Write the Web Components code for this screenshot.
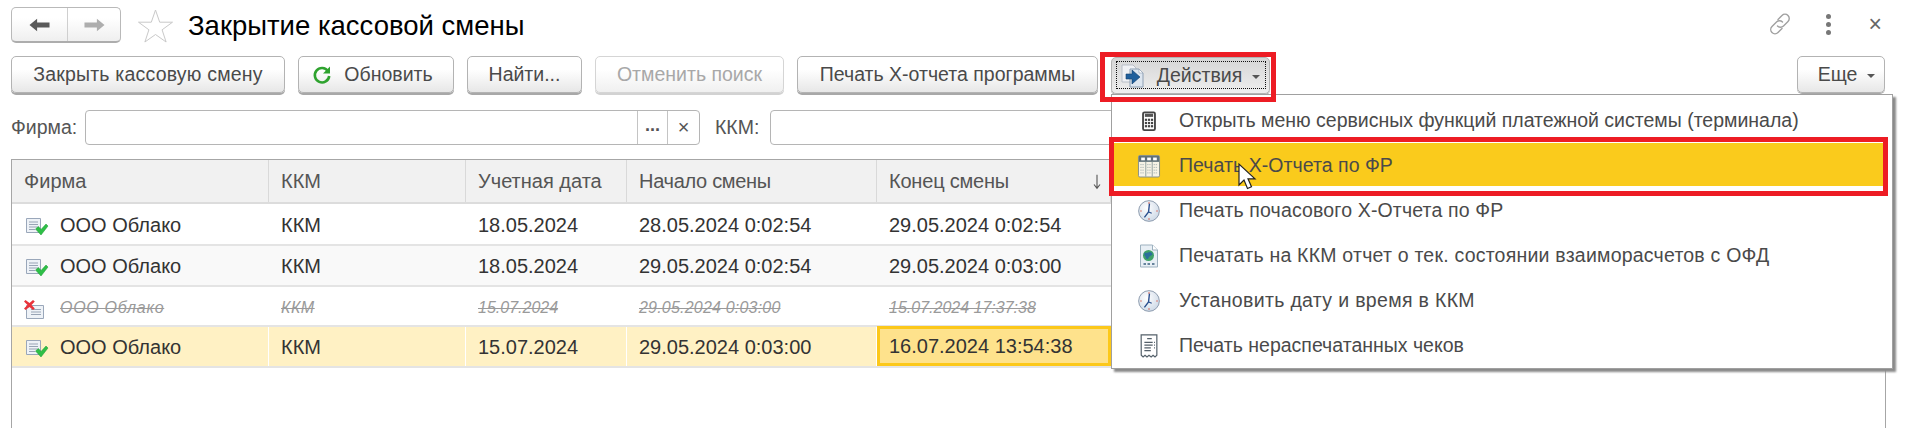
<!DOCTYPE html>
<html lang="ru"><head><meta charset="utf-8"><title>Закрытие кассовой смены</title>
<style>
html,body{margin:0;padding:0;background:#fff;overflow:hidden;width:1908px;height:428px}
body{font:19.5px "Liberation Sans",Arial,sans-serif;color:#333}
</style></head><body>
<onec-form>
  <onec-header slot="header" title-text="Закрытие кассовой смены"></onec-header>
  <onec-toolbar slot="toolbar">
    <onec-button style="width:274px;letter-spacing:.2px">Закрыть кассовую смену</onec-button>
    <onec-button style="width:156px;padding-right:7px"><onec-icon name="refresh" slot="icon" size="20"></onec-icon>Обновить</onec-button>
    <onec-button style="width:115px">Найти...</onec-button>
    <onec-button style="width:189px" disabled>Отменить поиск</onec-button>
    <onec-button style="width:301px">Печать X-отчета программы</onec-button>
    <onec-button style="width:159px" pressed drop><onec-icon name="actions" slot="icon" size="24"></onec-icon>Действия</onec-button>
    <onec-button style="width:88px;margin-left:auto;padding-left:11px" drop plain>Еще</onec-button>
  </onec-toolbar>
  <onec-filter slot="filter"></onec-filter>
  <onec-grid slot="grid">
    <onec-row head>
      <onec-cell>Фирма</onec-cell><onec-cell>ККМ</onec-cell><onec-cell>Учетная дата</onec-cell><onec-cell style="letter-spacing:-.3px">Начало смены</onec-cell><onec-cell sort style="letter-spacing:-.2px">Конец смены</onec-cell><onec-cell></onec-cell>
    </onec-row>
    <onec-row style="height:42px">
      <onec-cell icon="ok">ООО Облако</onec-cell><onec-cell>ККМ</onec-cell><onec-cell>18.05.2024</onec-cell><onec-cell>28.05.2024 0:02:54</onec-cell><onec-cell>29.05.2024 0:02:54</onec-cell><onec-cell></onec-cell>
    </onec-row>
    <onec-row style="height:41px" alt>
      <onec-cell icon="ok">ООО Облако</onec-cell><onec-cell>ККМ</onec-cell><onec-cell>18.05.2024</onec-cell><onec-cell>29.05.2024 0:02:54</onec-cell><onec-cell>29.05.2024 0:03:00</onec-cell><onec-cell></onec-cell>
    </onec-row>
    <onec-row style="height:40px" deleted>
      <onec-cell icon="del" style="letter-spacing:.7px">ООО Облако</onec-cell><onec-cell style="letter-spacing:.5px">ККМ</onec-cell><onec-cell>15.07.2024</onec-cell><onec-cell style="letter-spacing:.2px">29.05.2024 0:03:00</onec-cell><onec-cell>15.07.2024 17:37:38</onec-cell><onec-cell></onec-cell>
    </onec-row>
    <onec-row style="height:41px" current>
      <onec-cell icon="ok">ООО Облако</onec-cell><onec-cell>ККМ</onec-cell><onec-cell>15.07.2024</onec-cell><onec-cell>29.05.2024 0:03:00</onec-cell><onec-cell active>16.07.2024 13:54:38</onec-cell><onec-cell></onec-cell>
    </onec-row>
  </onec-grid>
  <onec-menu slot="overlay">
    <onec-menu-item icon="calc">Открыть меню сервисных функций платежной системы (терминала)</onec-menu-item>
    <onec-menu-item icon="table" selected style="letter-spacing:.05px">Печать X-Отчета по ФР</onec-menu-item>
    <onec-menu-item icon="clock" style="letter-spacing:.15px">Печать почасового X-Отчета по ФР</onec-menu-item>
    <onec-menu-item icon="globe" style="letter-spacing:.22px">Печатать на ККМ отчет о тек. состоянии взаиморасчетов с ОФД</onec-menu-item>
    <onec-menu-item icon="clock" style="letter-spacing:.33px">Установить дату и время в ККМ</onec-menu-item>
    <onec-menu-item icon="receipt">Печать нераспечатанных чеков</onec-menu-item>
  </onec-menu>
  <onec-frame slot="overlay" style="left:1100px;top:52px;width:176px;height:50px"></onec-frame>
  <onec-frame slot="overlay" style="left:1109px;top:137px;width:779px;height:59px"></onec-frame>
  <onec-icon slot="overlay" name="cursor" size="28" style="position:absolute;left:1234px;top:163px"></onec-icon>
</onec-form>
<script>
const ICONS={
 refresh:'<svg viewBox="0 0 20 20"><path d="M16 6.2A7.2 7.2 0 1 0 17.2 11" fill="none" stroke="#2fa32f" stroke-width="2.6"/><path d="M18 1.5v7h-7z" fill="#2fa32f"/></svg>',
 actions:'<svg viewBox="0 0 24 24"><path d="M1 1h11l3 3v14H1z" fill="#f0f1f4" stroke="#b9bfc8"/><path d="M9 5h9l4 4v14H9z" fill="#dde6f0" stroke="#8ea0b4"/><path d="M18 9V5l4 4z" fill="#fff" stroke="#8ea0b4" stroke-width=".6"/><path d="M5 10h6V6l8 7-8 7v-5H5z" fill="#1f5f9c" stroke="#163f6c" stroke-width=".6"/></svg>',
 calc:'<svg viewBox="0 0 24 24"><rect x="5.5" y="2.5" width="13" height="19.500" rx="1.500" fill="#fff" stroke="#444" stroke-width="2"/><rect x="7.500" y="4" width="9" height="3.500" fill="#555"/><g fill="#444"><rect x="7.500" y="9.500" width="2.400" height="2.400"/><rect x="10.800" y="9.500" width="2.400" height="2.400"/><rect x="14.100" y="9.500" width="2.400" height="2.400"/><rect x="7.500" y="13" width="2.400" height="2.400"/><rect x="10.800" y="13" width="2.400" height="2.400"/><rect x="14.100" y="13" width="2.400" height="2.400"/><rect x="7.500" y="16.500" width="2.400" height="2.400"/><rect x="10.800" y="16.500" width="2.400" height="2.400"/><rect x="14.100" y="16.500" width="2.400" height="2.400"/></g></svg>',
 table:'<svg viewBox="0 0 24 24"><rect x=".5" y=".5" width="23" height="23.500" rx="1.500" fill="#f6f3e6" stroke="#7d8a8a"/><rect x="1" y="1" width="22" height="6.500" fill="#5f7078"/><g fill="#fff"><rect x="3.500" y="2.800" width="4" height="3"/><rect x="10" y="2.800" width="4" height="3"/><rect x="16.500" y="2.800" width="4" height="3"/></g><path d="M8.500 7.500v16M15.500 7.500v16" stroke="#8a9a9a"/><path d="M2.500 10.500h4.500M2.500 13.500h4.500M2.500 16.500h4.500M2.500 19.500h4.500M10 10.500h4M10 13.500h4M10 16.500h4M10 19.500h4M17 10.500h4.500M17 13.500h4.500M17 16.500h4.500M17 19.500h4.500" stroke="#a9b4b4" stroke-dasharray="1.500 .8"/></svg>',
 clock:'<svg viewBox="0 0 24 24"><defs><radialGradient id="c" cx=".4" cy=".35" r=".8"><stop offset="0" stop-color="#fff"/><stop offset="1" stop-color="#c6d3e3"/></radialGradient></defs><circle cx="12" cy="12" r="11.300" fill="url(#c)" stroke="#8695a8" stroke-width="1"/><path d="M12 2.500v1.500M12 20v1.500M2.500 12H4M20 12h1.500" stroke="#d94c3c" stroke-width="1.200"/><path d="M12.500 4 11.500 13 7 19" fill="none" stroke="#2a4f8f" stroke-width="1.500"/><path d="M11.500 13l3.500 1.500" stroke="#2a4f8f" stroke-width="1.200"/></svg>',
 globe:'<svg viewBox="0 0 20 24"><path d="M1.500 1h12l5 5v17h-17z" fill="#e8eff5" stroke="#9db1bf"/><path d="M13.500 1v5h5" fill="#fff" stroke="#9db1bf"/><circle cx="9.500" cy="11.500" r="5.500" fill="#3fa268"/><path d="M6 8.500c2 1 3 0 4.500-.5s2.500 1 3 2-2 1.500-3 2.500-1 3-2.500 2.500-1-2-2-3-1-2 0-3.500" fill="#2a6f9c"/><path d="M4.500 20h2.500M8.500 20H11M13 20h2.500" stroke="#3c6280" stroke-width="1.400"/></svg>',
 receipt:'<svg viewBox="0 0 20 26"><path d="M1.500 1h17v22l-2 1.800-2.100-1.800-2.100 1.800-2.300-1.800-2.200 1.800-2.100-1.800-2.100 1.800-2-1.800z" fill="#fff" stroke="#54606a" stroke-width="1.300"/><path d="M8 5h5M5 9h9M15.500 9h1M5 12h9M15.500 12h1M5 15h7M15.500 15h1M5 18h7" stroke="#54606a" stroke-width="1.300"/></svg>',
 ok:'<svg viewBox="0 0 22 18"><path d="M.5.500h14v14H.5z" fill="#eef2f7" stroke="#9aa7ba"/><path d="M3 4h9M3 6.500h9M3 9h9M3 11.500h6" stroke="#98a4b5"/><path d="M9.500 11l3-2.500 2.500 3 5-5.500 2 2-7 9z" fill="#2ebf47" stroke="#1d9a33" stroke-width=".5"/></svg>',
 del:'<svg viewBox="0 0 22 18"><path d="M.5 5.500h17v13H.5z" fill="#eef2f7" stroke="#9aa7ba"/><path d="M5 9.500h10M5 12h10M5 14.500h10" stroke="#98a4b5"/><path d="M-2 1.500-.5 0 3.500 3 7 0 8.800 1.500 5.500 5 8.800 8.500 7 10 3.500 7-.5 10-2 8.500 1.500 5z" fill="#e8333b"/></svg>',
 cursor:'<svg viewBox="0 0 20 28"><path d="M1 1v21l5-5 3.500 8.500 4-1.700-3.500-8h7z" fill="#fff" stroke="#222" stroke-width="1.2"/></svg>',
 link:'<svg viewBox="0 0 24 24" fill="none" stroke="#a0a0a0" stroke-width="1.400" stroke-linecap="round"><path d="M10 7.500l4-4a4.200 4.200 0 0 1 6 6l-4.500 4.500a4.200 4.200 0 0 1-6 0"/><path d="M14 16.500l-4 4a4.200 4.200 0 0 1-6-6l4.500-4.500a4.200 4.200 0 0 1 6 0"/></svg>',
 star:'<svg viewBox="0 0 35 34"><path d="M17.500 1l4.200 12.200H34.500l-10.400 7.600 4 12.200-10.600-7.500L6.900 33l4-12.200L.5 13.200h12.800z" fill="#fff" stroke="#c9c9c9"/></svg>',
 back:'<svg viewBox="0 0 22 14"><path d="M0.500 7 8.500.5v4H21.500v5H8.500v4z" fill="#5a5a5a"/></svg>',
 fwd:'<svg viewBox="0 0 22 14"><path d="M21.500 7 13.500.5v4H.5v5H13.500v4z" fill="#aeaeae"/></svg>'
};
function def(name,css,html,extra){
  customElements.define(name,class extends HTMLElement{
    constructor(){super();this.attachShadow({mode:'open'}).innerHTML='<style>'+css+'</style>'+html;}
    connectedCallback(){extra&&extra.call(this,this.shadowRoot);}
  });
}
def('onec-icon',':host{display:inline-flex;line-height:0}svg{width:100%;height:100%;display:block;overflow:visible}','',function(r){
  const s=this.getAttribute('size');if(s){this.style.width=s+'px';this.style.height=s+'px';}
  if(!r.querySelector('svg')){const t=document.createElement('template');t.innerHTML=ICONS[this.getAttribute('name')]||'';r.appendChild(t.content);}
});
def('onec-form',':host{display:block;position:relative;width:1908px;height:428px;overflow:hidden}',
 '<slot name="header"></slot><slot name="toolbar"></slot><slot name="filter"></slot><slot name="grid"></slot><slot name="overlay"></slot>');
def('onec-header',`:host{display:flex;align-items:flex-start;height:56px;box-sizing:border-box;padding:7px 0 0 11px}
 .nav{display:flex;width:110px;height:36px;box-sizing:border-box;border:1px solid #b9b9b9;border-bottom:2px solid #adadad;border-radius:5px;background:linear-gradient(#fff 30%,#efefef)}
 .nav span{flex:1;display:flex;align-items:center;justify-content:center}
 .nav span:first-child{flex:0 0 55px;border-right:1px solid #cfcfcf}
 onec-icon{width:21px;height:14px}
 .star{width:35px;height:34px;margin:2px 15px 0 17px}
 h1{margin:0;font:400 27.5px/38px "Liberation Sans",Arial,sans-serif;color:#000}
 .tools{margin-left:auto;display:flex;align-items:center;height:34px;padding-right:26px;color:#777}
 .link{width:24px;height:24px;margin-right:34px}
 .dots{display:flex;flex-direction:column;gap:3px;margin-right:38px}
 .dots i{width:5px;height:5px;border-radius:50%;background:#777;display:block}
 .x{font-size:23px;line-height:24px;color:#666}`,
 `<div class="nav"><span><onec-icon name="back"></onec-icon></span><span><onec-icon name="fwd"></onec-icon></span></div>
  <onec-icon class="star" name="star"></onec-icon><h1></h1>
  <div class="tools"><onec-icon class="link" name="link"></onec-icon><div class="dots"><i></i><i></i><i></i></div><span class="x">×</span></div>`,
 function(r){r.querySelector('h1').textContent=this.getAttribute('title-text');});
def('onec-toolbar',':host{display:flex;gap:13px;height:54px;box-sizing:border-box;padding:0 23px 0 11px;align-items:flex-start}','<slot></slot>');
def('onec-button',`:host{display:inline-flex;align-items:center;justify-content:center;box-sizing:border-box;height:37px;border:1px solid #b3b3b3;border-radius:5px;
   box-shadow:0 2px 0 #a8a8a8;background:linear-gradient(#fff 35%,#e7e7e7);color:#4a4a4a;white-space:nowrap;font-size:19.5px}
 :host([disabled]){color:#a8a8a8;border-color:#d5d5d5;box-shadow:0 2px 0 #d2d2d2;background:linear-gradient(#fff 35%,#f0f0f0)}
 :host([pressed]){background:linear-gradient(#d6d6d6,#eee);margin-top:1px;position:relative;box-shadow:0 1px 0 #a8a8a8}
 :host([plain]){box-shadow:0 1px 0 #a8a8a8}
 ::slotted([slot=icon]){margin-right:12px}
 .caret{display:none;width:0;height:0;border:4px solid transparent;border-top:4px solid #555;border-bottom:0;margin-left:10px;margin-top:2px}
 :host([drop]) .caret{display:block}
 .focus{display:none;position:absolute;left:4px;top:3px;right:3px;bottom:4px;border:1px dotted #111}
 :host([pressed]) .focus{display:block}`,
 '<slot name="icon"></slot><slot></slot><span class="caret"></span><span class="focus"></span>');
def('onec-input',`:host{display:flex;box-sizing:border-box;height:35px;border:1px solid #b5b5b5;border-radius:4px;background:#fff;color:#555}
 .g{flex:1}.b{display:flex;align-items:center;justify-content:center;border-left:1px solid #c4c4c4;height:100%}
 .dots{width:30px;font-weight:700;font-size:18px;padding-bottom:5px;box-sizing:border-box}.clr{width:31px;font-size:20px}`,
 '<div class="g"></div><div class="b dots">...</div><div class="b clr">×</div>');
def('onec-filter',`:host{display:flex;align-items:flex-start;height:49px;box-sizing:border-box;padding:0 23px 0 11px;color:#555;font-size:19.5px}
 label{line-height:35px;width:74px;flex:none}
 .a{width:615px}.b{flex:1}.k{margin-left:15px;width:55px}`,
 '<label>Фирма:</label><onec-input class="a"></onec-input><label class="k">ККМ:</label><onec-input class="b"></onec-input>');
def('onec-grid',`:host{display:block;box-sizing:border-box;margin:0 22px 0 11px;height:269px;border:1px solid #a6a6a6;border-bottom:0;font-size:20px}`,'<slot></slot>');
def('onec-row',`:host{display:grid;grid-template-columns:257px 197px 161px 250px 234px 1fr;box-sizing:border-box;height:44px;border-bottom:2px solid #e4e4e4;color:#333;--pt:2px}
 :host([head]){background:#f1f1f1;--sep:#d9d9d9;color:#555;border-bottom-color:#dcdcdc;--pt:0px}
 :host([alt]){background:#f9f9f9}
 :host([deleted]){color:#9a9a9a;font-style:italic;font-size:16px;--deco:line-through;--pt:3px}
 :host([current]){background:#fff1c4;--sep:#fff}`,'<slot></slot>');
def('onec-cell',`:host{display:flex;align-items:center;box-sizing:border-box;padding:var(--pt,0) 0 0 12px;border-right:1px solid var(--sep,transparent);white-space:nowrap;min-width:0;position:relative}
 .t{text-decoration:var(--deco,none)}
 .ic{width:22px;height:18px;margin:3px 12px 0 2px;flex:none}
 :host([active]){background:#fee28c;border:3px solid #fcc81a;padding:0 0 0 9px;margin:-1px 0 0 0;color:#333}
 .s{display:none;position:absolute;right:7px;top:13px;width:12px;height:17px}
 :host([sort]) .s{display:block}`,
 '<span class="t"><slot></slot></span><svg class="s" viewBox="0 0 14 20"><path d="M7 2v15M3.500 13.500 7 18l3.500-4.500" fill="none" stroke="#555" stroke-width="1.300"/></svg>',
 function(r){const i=this.getAttribute('icon');if(i&&!r.querySelector('.ic')){const e=document.createElement('onec-icon');e.className='ic';e.setAttribute('name',i);r.insertBefore(e,r.querySelector('.t'));}});
def('onec-menu',`:host{position:absolute;left:1111px;top:94px;width:782px;height:275px;box-sizing:border-box;background:#fff;border:1px solid #a0a0a0;padding-top:3px;box-shadow:3px 3px 2px #8a8a8a;color:#4a4a4a}`,'<slot></slot>');
def('onec-menu-item',`:host{display:flex;align-items:center;height:45px;box-sizing:border-box;padding-left:26px;white-space:nowrap}
 :host([selected]){background:linear-gradient(#facb1c calc(100% - 2px),#fff 0);margin-right:8px}
 .ic{width:22px;height:24px;margin-right:19px;flex:none;display:flex}`,
 '<slot></slot>',
 function(r){if(!r.querySelector('.ic')){const e=document.createElement('onec-icon');e.className='ic';e.setAttribute('name',this.getAttribute('icon'));r.insertBefore(e,r.querySelector('slot'));}});
def('onec-frame',':host{position:absolute;box-sizing:border-box;border:5px solid #ed1c24;pointer-events:none}','');
</script>
</body></html>
